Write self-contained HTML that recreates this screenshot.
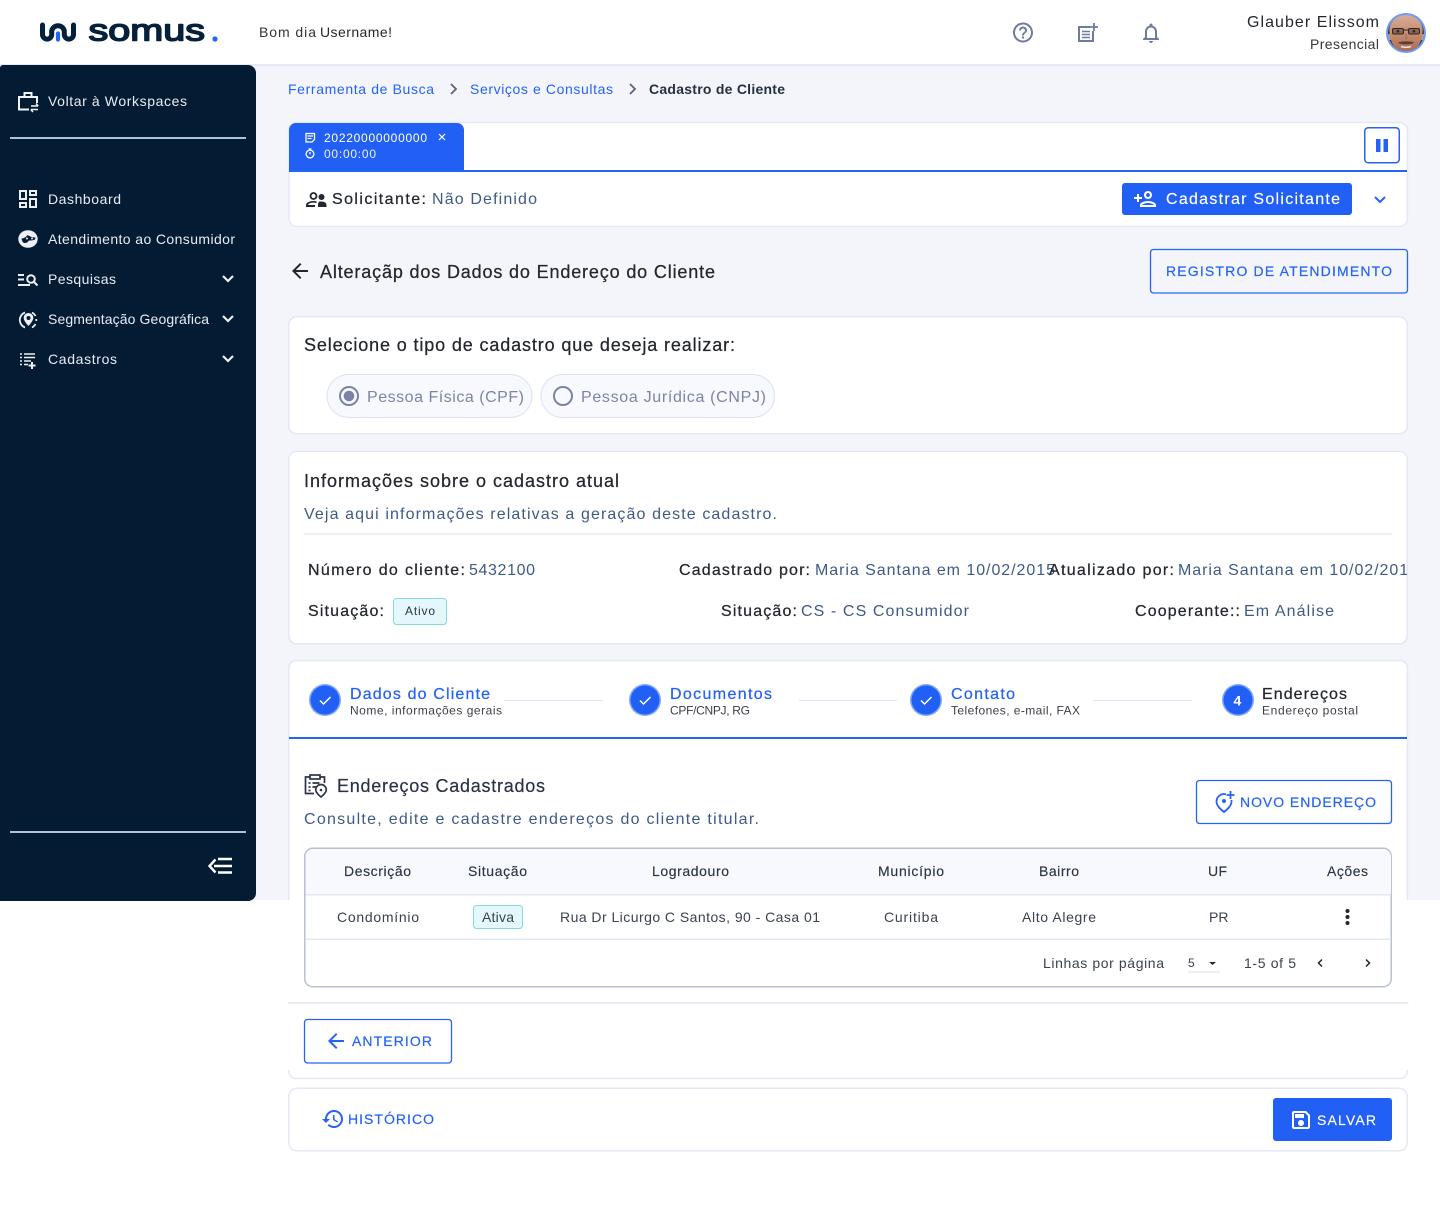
<!DOCTYPE html>
<html lang="pt-BR"><head><meta charset="utf-8"><title>Somus - Cadastro de Cliente</title>
<style>
html,body{margin:0;padding:0;background:#fff}
body{width:1440px;height:1216px;overflow:hidden;position:relative}
svg{display:block;position:absolute;left:0;top:0}
text{font-family:"Liberation Sans",sans-serif;font-size:16px;fill:#24282e;white-space:pre}
.m{stroke:currentColor;stroke-width:.25px}
.s{font-size:14px;fill:#e8ebf3}
.t{font-size:18px;color:#24282e;stroke:#24282e;stroke-width:.25px}
.v{fill:#3f5a86}
.d{font-size:14px;fill:#3a4150}
.h{font-size:14px;fill:#2c3444;stroke:#2c3444;stroke-width:.15px}
.b{font-size:14px;fill:#2563f4;stroke:#2563f4;stroke-width:.2px}
.sub{font-size:12px;fill:#3b3f46}
.st{fill:#2563f4;stroke:#2563f4;stroke-width:.25px}
.ck{fill:none;stroke:#fff;stroke-width:1.5}
.ln{fill:#dbe2f5}
</style></head><body>
<svg width="1440" height="1216" viewBox="0 0 1440 1216" xmlns="http://www.w3.org/2000/svg">
<defs><clipPath id="av"><circle cx="1406" cy="33" r="18"/></clipPath>
<clipPath id="cl"><rect x="1040" y="555" width="367" height="30"/></clipPath>
<linearGradient id="sk" x1="0" y1="0" x2="0" y2="1"><stop offset="0" stop-color="#d9b09a"/><stop offset=".55" stop-color="#c48a6c"/><stop offset="1" stop-color="#a96a52"/></linearGradient></defs>

<!-- backgrounds -->
<rect x="0" y="0" width="1440" height="1216" fill="#fff"/>
<rect x="0" y="65" width="1440" height="835" fill="#f3f5fa"/>
<rect x="0" y="64" width="1440" height="2" fill="#e6eaf6"/>

<!-- header -->
<g fill="none" stroke="#05203a" stroke-width="5" stroke-linecap="round">
<path d="M42.500 25V34.500a4.600 4.600 0 0 0 9.200 0V31a6.400 6.400 0 0 1 12.600 0V34.500a4.600 4.600 0 0 0 9.200 0V25" stroke-linejoin="round"/>
</g>
<path d="M58 39.500V33.500" stroke="#2563f4" stroke-width="4.200" stroke-linecap="round"/>
<text x="88.500" y="40.300" textLength="116.500" lengthAdjust="spacingAndGlyphs" style="font-size:31px;fill:#05203a;stroke:#05203a;stroke-width:1.500px;stroke-linejoin:round">somus</text>
<circle cx="215" cy="39" r="2.600" fill="#2563f4"/>
<text x="259" y="37" textLength="57" style="font-size:14px;fill:#33363b">Bom dia</text>
<text x="320" y="37" textLength="72" style="font-size:14px;fill:#24282e">Username!</text>

<g fill="#6f7aa0">
<path transform="translate(1011,20.500)" d="M11 18h2v-2h-2v2zm1-16C6.480 2 2 6.480 2 12s4.480 10 10 10 10-4.480 10-10S17.520 2 12 2zm0 18c-4.410 0-8-3.590-8-8s3.590-8 8-8 8 3.590 8 8-3.590 8-8 8zm0-14c-2.210 0-4 1.790-4 4h2c0-1.100.9-2 2-2s2 .9 2 2c0 2-3 1.750-3 5h2c0-2.250 3-2.500 3-5 0-2.210-1.790-4-4-4z"/>
<path transform="translate(1139,21)" d="M12 22c1.100 0 2-.9 2-2h-4c0 1.100.9 2 2 2zm6-6v-5c0-3.070-1.630-5.640-4.500-6.320V4c0-.83-.67-1.500-1.500-1.500s-1.500.67-1.500 1.500v.68C7.640 5.360 6 7.920 6 11v5l-2 2v1h16v-1l-2-2zm-2 1H8v-6c0-2.480 1.510-4.500 4-4.500s4 2.020 4 4.500v6z"/>
</g>
<g fill="none" stroke="#6f7aa0" stroke-width="2">
<path d="M1090 27H1079V41H1093V31"/>
<path d="M1082 31.500h8M1082 34.500h8M1082 37.500h8" stroke-width="1.600"/>
<path d="M1094 23v8M1090 27h8" stroke-width="1.800"/>
</g>
<text x="1247" y="27" textLength="132">Glauber Elissom</text>
<text x="1310" y="49" textLength="69" style="font-size:14px;fill:#33363b">Presencial</text>
<circle cx="1406" cy="33" r="20" fill="#6a9bfb"/>
<g clip-path="url(#av)">
<rect x="1386" y="13" width="40" height="40" fill="#a89a90"/>
<rect x="1386" y="40" width="40" height="13" fill="#4b3a33"/>
<ellipse cx="1406" cy="33" rx="16" ry="20" fill="url(#sk)"/>
<path d="M1390 34c-1.500-6 0-10 2.500-13-3 0-6 2-6 13zM1422 34c1.500-6 0-10-2.500-13 3 0 6 2 6 13z" fill="#4a3a33"/>
<rect x="1392.500" y="28.500" width="11" height="5.500" rx="1.500" fill="#8a6452" stroke="#2d2523" stroke-width="1"/>
<rect x="1408.500" y="28.500" width="11" height="5.500" rx="1.500" fill="#8a6452" stroke="#2d2523" stroke-width="1"/>
<path d="M1403.500 30h5" stroke="#2d2523" stroke-width="1"/>
<circle cx="1398" cy="31.200" r="1.300" fill="#2d2523"/><circle cx="1414" cy="31.200" r="1.300" fill="#2d2523"/>
<path d="M1406 34v5" stroke="#a5705a" stroke-width="1.500"/>
<path d="M1398 42.500c3-1.500 13-1.500 16 0-2 2.500-14 2.500-16 0z" fill="#5c3d33"/>
<path d="M1401 46.500c3 1 7 1 10 0" stroke="#efe3dc" stroke-width="1.500" fill="none"/>
<path d="M1394 48c6 4 18 4 24 0v6h-24z" fill="#5a4036"/>
</g>

<!-- sidebar -->
<path d="M0 68a3 3 0 0 1 3-3H248a8 8 0 0 1 8 8V893a8 8 0 0 1-8 8H0z" fill="#031c34"/>
<g fill="none" stroke="#f1f3f8" stroke-width="2">
<path d="M29 109.500H19V97H37V103"/>
<path d="M24.500 97V93H31.500V97"/>
<path d="M31 106h7M36 103.500l2.300 2.500M31 109.500h7M33 112l-2.300-2.500" stroke-width="1.400"/>
</g>
<text class="s" x="48" y="106" textLength="139">Voltar à Workspaces</text>
<rect x="10" y="137" width="236" height="2" fill="#b6bdd6"/>
<path transform="translate(16,187)" fill="#eef0f5" d="M19 5v2h-4V5h4M9 5v6H5V5h4m10 8v6h-4v-6h4M9 17v2H5v-2h4M21 3h-8v6h8V3zM11 3H3v10h8V3zm10 8h-8v10h8V11zm-10 4H3v6h8v-6z"/>
<text class="s" x="48" y="204" textLength="73">Dashboard</text>
<ellipse cx="28" cy="239" rx="9.700" ry="8.800" fill="#eef0f5"/>
<path d="M21.500 238.500c3 0 5-2 6-3.500 2 1.500 5 2.500 8 2.500l-.5 2c-2.500 1-4 1-5.500 1s-1 2.500-5 2.500c-1.500 0-2.500-2-3-4.500z" fill="#031c34"/>
<circle cx="27" cy="238.500" r="1" fill="#eef0f5"/><circle cx="32" cy="238.500" r="1" fill="#eef0f5"/>
<text class="s" x="48" y="244" textLength="187">Atendimento ao Consumidor</text>
<g fill="none" stroke="#eef0f5" stroke-width="2">
<path d="M18 275h6M18 279.500h6M18 285h12" />
<circle cx="31" cy="279" r="3.800"/><path d="M34 282l3.500 3.500"/>
</g>
<text class="s" x="48" y="284" textLength="68">Pesquisas</text>
<g fill="none" stroke="#eef0f5" stroke-width="1.800">
<path d="M25 312.500a8 8 0 0 0 0 15"/>
<path d="M32 312.500a8 8 0 0 1 3.500 3.500M36.300 319v2M35.500 324a8 8 0 0 1-3.500 3.500"/>
</g>
<path d="M28.500 313a4.800 4.800 0 0 0-4.800 4.800c0 3.500 4.800 8.200 4.800 8.200s4.800-4.700 4.800-8.200a4.800 4.800 0 0 0-4.800-4.800z" fill="#eef0f5"/><circle cx="28.500" cy="318" r="2" fill="#031c34"/>
<text class="s" x="48" y="324" textLength="161">Segmentação Geográfica</text>
<g stroke="#eef0f5" stroke-width="1.600" fill="none">
<path d="M20 354h2M24 354h11M20 357.500h2M24 357.500h11M20 361h2M24 361h7M20 364.500h2M24 364.500h4"/>
<path d="M32 362v7M28.500 365.500h7" stroke-width="2"/>
</g>
<text class="s" x="48" y="364" textLength="69">Cadastros</text>
<g fill="none" stroke="#eef0f5" stroke-width="2.200">
<path d="M223 276l5 5 5-5M223 316l5 5 5-5M223 356l5 5 5-5"/>
</g>
<rect x="10" y="831" width="236" height="2" fill="#b6bdd6"/>
<g fill="none" stroke="#fff" stroke-width="2.400">
<path d="M218 859h14M214 866h18M218 872.500h14"/>
<path d="M215.500 859.500L209.500 866l6 6.500" stroke-width="2.400"/>
</g>

<!-- breadcrumb -->
<text class="b" x="288" y="94" textLength="146" style="stroke-width:0">Ferramenta de Busca</text>
<path d="M451 84l5 5-5 5M630 84l5 5-5 5" fill="none" stroke="#5a6478" stroke-width="1.800"/>
<text class="b" x="470" y="94" textLength="143" style="stroke-width:0">Serviços e Consultas</text>
<text x="649" y="94" textLength="136" style="font-size:14px;font-weight:700;fill:#27303d">Cadastro de Cliente</text>

<!-- card 1 -->
<rect x="289" y="122.500" width="1118.500" height="104" rx="8" fill="#fff" stroke="#e4e8f6" stroke-width="1.500"/>
<path d="M289 170V130a7 7 0 0 1 7-7H457a7 7 0 0 1 7 7V170z" fill="#2260f5"/>
<rect x="289" y="170" width="1118" height="2" fill="#2563f4"/>
<g fill="none" stroke="#fff" stroke-width="1.300">
<path d="M306 133.500h8.500v6l-2.500 2.500h-6zM307.500 136h5.500M307.500 138.500h4"/>
<circle cx="310" cy="154" r="3.900"/><path d="M308.500 149h3M310 152v2.200"/>
</g>
<text x="324" y="142" textLength="103" style="font-size:12px;fill:#fff">20220000000000</text>
<path d="M439 134l6 6M445 134l-6 6" stroke="#fff" stroke-width="1.200"/>
<text x="324" y="158" textLength="52" style="font-size:12px;fill:#eef2ff">00:00:00</text>
<rect x="1364.750" y="127.750" width="34.500" height="35" rx="3.500" fill="#fff" stroke="#2563f4" stroke-width="1.500"/>
<rect x="1376" y="139" width="4.500" height="13" fill="#2563f4"/><rect x="1383.500" y="139" width="4.500" height="13" fill="#2563f4"/>
<g fill="#24282e">
<circle cx="313.500" cy="196" r="3" fill="none" stroke="#24282e" stroke-width="1.800"/>
<circle cx="321.500" cy="197" r="3"/>
<path d="M306 207v-2c0-2.500 4-4 7.500-4 1.300 0 2.300.2 3 .4v1.600c-1-.3-2-.4-3-.4-2.500 0-5 .8-5.500 2.400h7v2zM318 207v-2.500c0-1 .3-2 1-2.700.8-.2 1.500-.3 2.500-.3 2.500 0 5 1.200 5 3.500v2z"/>
</g>
<text x="332" y="204" textLength="94" style="fill:#24282e;stroke:#24282e;stroke-width:.25px">Solicitante:</text>
<text class="v" x="432" y="204" textLength="105">Não Definido</text>
<rect x="1122" y="183" width="230" height="32" rx="3" fill="#2260f5"/>
<path transform="translate(1133,187)" fill="#fff" d="M15 12c2.210 0 4-1.790 4-4s-1.790-4-4-4-4 1.790-4 4 1.790 4 4 4zm0-6c1.100 0 2 .9 2 2s-.9 2-2 2-2-.9-2-2 .9-2 2-2zm0 8c-2.670 0-8 1.340-8 4v2h16v-2c0-2.660-5.330-4-8-4zm-6 4c.22-.72 3.310-2 6-2 2.700 0 5.800 1.290 6 2H9zm-3-3v-3h3v-2H6V7H4v3H1v2h3v3h2z"/>
<text x="1166" y="204" textLength="174" style="fill:#fff;stroke:#fff;stroke-width:.15px">Cadastrar Solicitante</text>
<path d="M1375 197l5 5 5-5" fill="none" stroke="#2563f4" stroke-width="2"/>

<!-- title row -->
<path transform="translate(288,259)" fill="#24282e" d="M20 11H7.830l5.590-5.590L12 4l-8 8 8 8 1.410-1.410L7.830 13H20v-2z"/>
<text class="t" x="320" y="278" textLength="395">Alteraçãp dos Dados do Endereço do Cliente</text>
<rect x="1150.500" y="249.500" width="257" height="43.500" rx="3" fill="#f3f5fa" stroke="#2563f4" stroke-width="1.300"/>
<text class="b" x="1166" y="276" textLength="226">REGISTRO DE ATENDIMENTO</text>

<!-- card 2 -->
<rect x="288.750" y="316.750" width="1118.500" height="117" rx="8" fill="#fff" stroke="#e4e8f6" stroke-width="1.500"/>
<text class="t" x="304" y="351" textLength="431">Selecione o tipo de cadastro que deseja realizar:</text>
<rect x="327" y="374.500" width="205" height="43" rx="21.500" fill="#f7f9fe" stroke="#dce1f2"/>
<rect x="541" y="374.500" width="233.500" height="43" rx="21.500" fill="#f7f9fe" stroke="#dce1f2"/>
<circle cx="349" cy="396" r="9" fill="none" stroke="#7b84a6" stroke-width="2"/><circle cx="349" cy="396" r="5.300" fill="#7b84a6"/>
<circle cx="563" cy="396" r="9" fill="none" stroke="#7b84a6" stroke-width="2"/>
<text x="367" y="402" textLength="157" style="fill:#7c84a5">Pessoa Física (CPF)</text>
<text x="581" y="402" textLength="185" style="fill:#7c84a5">Pessoa Jurídica (CNPJ)</text>

<!-- card 3 -->
<rect x="288.750" y="451.250" width="1118.500" height="192.500" rx="8" fill="#fff" stroke="#e4e8f6" stroke-width="1.500"/>
<text class="t" x="304" y="487" textLength="315">Informações sobre o cadastro atual</text>
<text class="v" x="304" y="519" textLength="473">Veja aqui informações relativas a geração deste cadastro.</text>
<rect x="304" y="533.500" width="1088" height="1" fill="#dfe2ea"/>
<text x="308" y="575" textLength="157" class="m" style="color:#24282e">Número do cliente:</text>
<text class="v" x="469" y="575" textLength="66">5432100</text>
<text x="679" y="575" textLength="131" class="m" style="color:#24282e">Cadastrado por:</text>
<text class="v" x="815" y="575" textLength="240">Maria Santana em 10/02/2015</text>
<g clip-path="url(#cl)">
<text x="1049" y="575" textLength="125" class="m" style="color:#24282e">Atualizado por:</text>
<text class="v" x="1178" y="575" textLength="240">Maria Santana em 10/02/2015</text>
</g>
<text x="308" y="616" textLength="76" class="m" style="color:#24282e">Situação:</text>
<rect x="393.500" y="598.500" width="53" height="26" rx="3" fill="#e4f7fa" stroke="#86d7e2"/>
<text x="405" y="615" textLength="30" style="font-size:12px;fill:#2c3444">Ativo</text>
<text x="721" y="616" textLength="76" class="m" style="color:#24282e">Situação:</text>
<text class="v" x="801" y="616" textLength="168">CS - CS Consumidor</text>
<text x="1135" y="616" textLength="105" class="m" style="color:#24282e">Cooperante::</text>
<text class="v" x="1244" y="616" textLength="90">Em Análise</text>

<!-- card 4 -->
<path d="M288.750 1003V668a7.500 7.500 0 0 1 7.500-7.500H1400a7.500 7.500 0 0 1 7.500 7.500V1003z" fill="#fff" stroke="#e4e8f6" stroke-width="1.500"/>
<path d="M288.750 1003V1071a7.500 7.500 0 0 0 7.500 7.500H1400a7.500 7.500 0 0 0 7.500-7.500V1003z" fill="#fff" stroke="#e4e8f6" stroke-width="1.500"/>
<rect x="288" y="900" width="2" height="102" fill="#fff"/><rect x="1406.500" y="900" width="2" height="102" fill="#fff"/>
<rect x="288" y="1004" width="2" height="66" fill="#fff"/><rect x="1406.500" y="1004" width="2" height="66" fill="#fff"/>
<rect x="289" y="737" width="1118" height="2" fill="#2563f4"/>

<g>
<circle cx="325" cy="700" r="16" fill="#7ea6fb"/><circle cx="325" cy="700" r="14.500" fill="#2260f5"/>
<path class="ck" d="M320 700.500l3.500 3.500 7-7"/>
<circle cx="645" cy="700" r="16" fill="#7ea6fb"/><circle cx="645" cy="700" r="14.500" fill="#2260f5"/>
<path class="ck" d="M640 700.500l3.500 3.500 7-7"/>
<circle cx="926" cy="700" r="16" fill="#7ea6fb"/><circle cx="926" cy="700" r="14.500" fill="#2260f5"/>
<path class="ck" d="M921 700.500l3.500 3.500 7-7"/>
<circle cx="1238" cy="700" r="16" fill="#7ea6fb"/><circle cx="1238" cy="700" r="14.500" fill="#2260f5"/>
<text x="1233.500" y="705.500" textLength="9" style="font-size:14px;fill:#fff;font-weight:700">4</text>
</g>
<text class="st" x="350" y="699" textLength="140">Dados do Cliente</text>
<text class="sub" x="350" y="714.500" textLength="152">Nome, informações gerais</text>
<rect class="ln" x="504" y="700" width="98" height="1"/>
<text class="st" x="670" y="699" textLength="102">Documentos</text>
<text class="sub" x="670" y="714.500" textLength="80">CPF/CNPJ, RG</text>
<rect class="ln" x="799" y="700" width="98" height="1"/>
<text class="st" x="951" y="699" textLength="64">Contato</text>
<text class="sub" x="951" y="714.500" textLength="129">Telefones, e-mail, FAX</text>
<rect class="ln" x="1094" y="700" width="98" height="1"/>
<text x="1262" y="699" textLength="85" class="m" style="color:#24282e">Endereços</text>
<text class="sub" x="1262" y="714.500" textLength="96">Endereço postal</text>

<!-- addresses -->
<g fill="none" stroke="#2c3447" stroke-width="1.700">
<path d="M310 777h-4.500v16.500H314M320 777h4.500v6"/>
<rect x="310" y="775" width="10" height="4" fill="#fff"/>
<path d="M308.500 783h2M312.500 783h7M308.500 787h2M312.500 787h4M308.500 790.500h2"/>
<path d="M321 784.500a5.300 5.300 0 0 0-5.300 5.300c0 3.200 5.300 7.200 5.300 7.200s5.300-4 5.300-7.200a5.300 5.300 0 0 0-5.300-5.300z" fill="#fff"/>
<circle cx="321" cy="790" r="1.300" fill="#2c3447" stroke="none"/>
</g>
<text x="337" y="792" textLength="208" style="font-size:18px;fill:#2a3247;stroke:#2a3247;stroke-width:.2px">Endereços Cadastrados</text>
<text class="v" x="304" y="824" textLength="455">Consulte, edite e cadastre endereços do cliente titular.</text>
<rect x="1196.500" y="780.500" width="195" height="43" rx="3" fill="#fff" stroke="#2563f4" stroke-width="1.300"/>
<g fill="none" stroke="#2563f4" stroke-width="1.800">
<path d="M1226 794.300A7.500 7.500 0 0 0 1216.500 801.500C1216.500 806 1221 809.500 1224 812C1227 809.500 1231.500 806 1231.500 801.500V800"/>
<path d="M1230.500 791v8M1226.500 795h8"/>
</g>
<circle cx="1224" cy="801" r="2" fill="#2563f4"/>
<text class="b" x="1240" y="807" textLength="136">NOVO ENDEREÇO</text>

<!-- table -->
<rect x="304.750" y="848.250" width="1086.500" height="138.500" rx="8" fill="#fff" stroke="#b9c0d4" stroke-width="1.500"/>
<path d="M305.500 894V857a8 8 0 0 1 8-8H1383a8 8 0 0 1 8 8V894z" fill="#f7f9fe"/>
<rect x="305.500" y="894" width="1085.500" height="1.500" fill="#e3e7f4"/>
<rect x="305.500" y="938.500" width="1085.500" height="1.500" fill="#e3e7f4"/>
<text class="h" x="344" y="876" textLength="67">Descrição</text>
<text class="h" x="468" y="876" textLength="59">Situação</text>
<text class="h" x="652" y="876" textLength="77">Logradouro</text>
<text class="h" x="878" y="876" textLength="66">Município</text>
<text class="h" x="1039" y="876" textLength="40">Bairro</text>
<text class="h" x="1208" y="876" textLength="19">UF</text>
<text class="h" x="1327" y="876" textLength="41">Ações</text>
<text class="d" x="337" y="922" textLength="82">Condomínio</text>
<rect x="473.500" y="905.500" width="49" height="23" rx="3" fill="#e4f7fa" stroke="#86d7e2"/>
<text class="d" x="482" y="922" textLength="32">Ativa</text>
<text class="d" x="560" y="922" textLength="260">Rua Dr Licurgo C Santos, 90 - Casa 01</text>
<text class="d" x="884" y="922" textLength="54">Curitiba</text>
<text class="d" x="1022" y="922" textLength="74">Alto Alegre</text>
<text class="d" x="1209" y="922">PR</text>
<g fill="#24282e"><circle cx="1347.500" cy="911" r="2"/><circle cx="1347.500" cy="917" r="2"/><circle cx="1347.500" cy="923" r="2"/></g>
<text class="d" x="1043" y="968" textLength="121">Linhas por página</text>
<text x="1188" y="967" style="font-size:12px;fill:#3a4150">5</text>
<path d="M1209 962h7l-3.500 3z" fill="#24282e"/>
<rect x="1188" y="971.500" width="32" height="1" fill="#d8ddec"/>
<text class="d" x="1244" y="968" textLength="52">1-5 of 5</text>
<path d="M1322 959.500l-3.500 3.500 3.500 3.500M1366 959.500l3.500 3.500-3.500 3.500" fill="none" stroke="#24282e" stroke-width="1.500"/>

<!-- anterior -->
<rect x="304.500" y="1019.500" width="147" height="43.500" rx="3" fill="#fff" stroke="#2563f4" stroke-width="1.300"/>
<path transform="translate(324,1029)" fill="#2563f4" d="M20 11H7.830l5.590-5.590L12 4l-8 8 8 8 1.410-1.410L7.830 13H20v-2z"/>
<text class="b" x="352" y="1046" textLength="80">ANTERIOR</text>

<!-- footer card -->
<rect x="288.750" y="1088.250" width="1118.500" height="62.500" rx="8" fill="#fff" stroke="#e4e8f6" stroke-width="1.500"/>
<path transform="translate(321,1107)" fill="#2563f4" d="M13 3c-4.970 0-9 4.030-9 9H1l3.890 3.890.07.14L9 12H6c0-3.870 3.130-7 7-7s7 3.130 7 7-3.130 7-7 7c-1.930 0-3.680-.79-4.940-2.060l-1.420 1.420C8.270 19.990 10.510 21 13 21c4.970 0 9-4.030 9-9s-4.030-9-9-9zm-1 5v5l4.280 2.540.72-1.210-3.500-2.080V8H12z"/>
<text class="b" x="348" y="1124" textLength="86">HISTÓRICO</text>
<rect x="1273" y="1098" width="119" height="43" rx="3" fill="#2260f5"/>
<path transform="translate(1289,1108)" fill="#fff" d="M17 3H5c-1.110 0-2 .9-2 2v14c0 1.100.89 2 2 2h14c1.100 0 2-.9 2-2V7l-4-4zm2 16H5V5h11.170L19 7.830V19zm-7-7c-1.660 0-3 1.340-3 3s1.340 3 3 3 3-1.340 3-3-1.340-3-3-3zM6 6h9v4H6z"/>
<text x="1317" y="1125" textLength="59" style="font-size:14px;fill:#fff;stroke:#fff;stroke-width:.15px">SALVAR</text>
</svg>
</body></html>
